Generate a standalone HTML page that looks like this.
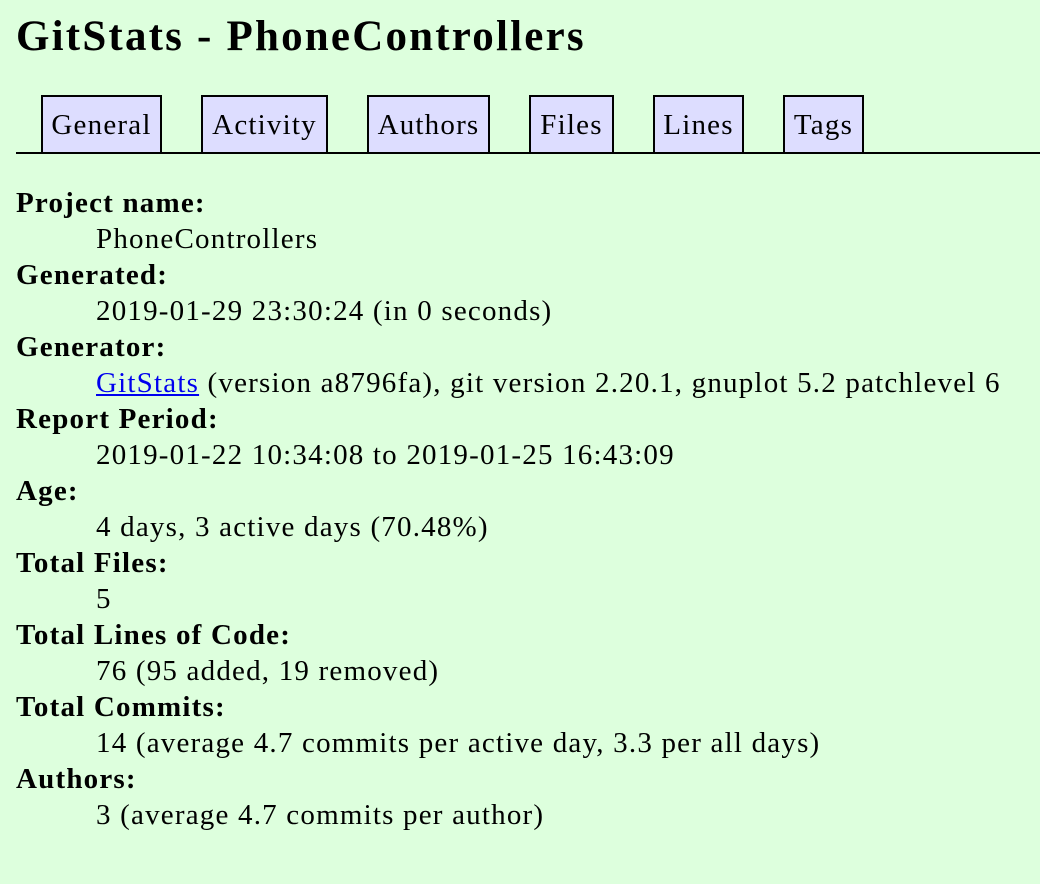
<!DOCTYPE html>
<html><head><meta charset="utf-8"><style>
body{margin:0;background:#dfd;width:1040px;height:884px;overflow:hidden;font-family:"Liberation Serif",serif;color:#000;position:relative}
h1{position:absolute;left:16px;top:9px;margin:0;font-size:43px;letter-spacing:2.2px;line-height:56px;font-weight:bold;white-space:nowrap}
.nav{position:absolute;left:16px;right:0;top:152px;border-top:2px solid #000}
.tab{position:absolute;top:95px;height:57px;border:2px solid #000;border-bottom:none;background:#ddf;font-size:29px;letter-spacing:1.2px;line-height:56px;text-align:center;box-sizing:border-box;white-space:nowrap}
dl{position:absolute;left:16px;top:185px;margin:0;font-size:29px;letter-spacing:1.2px;line-height:36px;white-space:nowrap}
dt{font-weight:bold}
dd{margin-left:80px}
a{color:#00e;text-decoration:underline}
</style></head><body>
<h1>GitStats - PhoneControllers</h1>
<div class="tab" style="left:41px;width:121px">General</div>
<div class="tab" style="left:201px;width:127px">Activity</div>
<div class="tab" style="left:367px;width:123px">Authors</div>
<div class="tab" style="left:529px;width:85px">Files</div>
<div class="tab" style="left:653px;width:91px">Lines</div>
<div class="tab" style="left:783px;width:81px">Tags</div>
<div class="nav"></div>
<dl>
<dt>Project name:</dt><dd>PhoneControllers</dd>
<dt>Generated:</dt><dd>2019-01-29 23:30:24 (in 0 seconds)</dd>
<dt>Generator:</dt><dd><a>GitStats</a> (version a8796fa), git version 2.20.1, gnuplot 5.2 patchlevel 6</dd>
<dt>Report Period:</dt><dd>2019-01-22 10:34:08 to 2019-01-25 16:43:09</dd>
<dt>Age:</dt><dd>4 days, 3 active days (70.48%)</dd>
<dt>Total Files:</dt><dd>5</dd>
<dt>Total Lines of Code:</dt><dd>76 (95 added, 19 removed)</dd>
<dt>Total Commits:</dt><dd>14 (average 4.7 commits per active day, 3.3 per all days)</dd>
<dt>Authors:</dt><dd>3 (average 4.7 commits per author)</dd>
</dl>
</body></html>
